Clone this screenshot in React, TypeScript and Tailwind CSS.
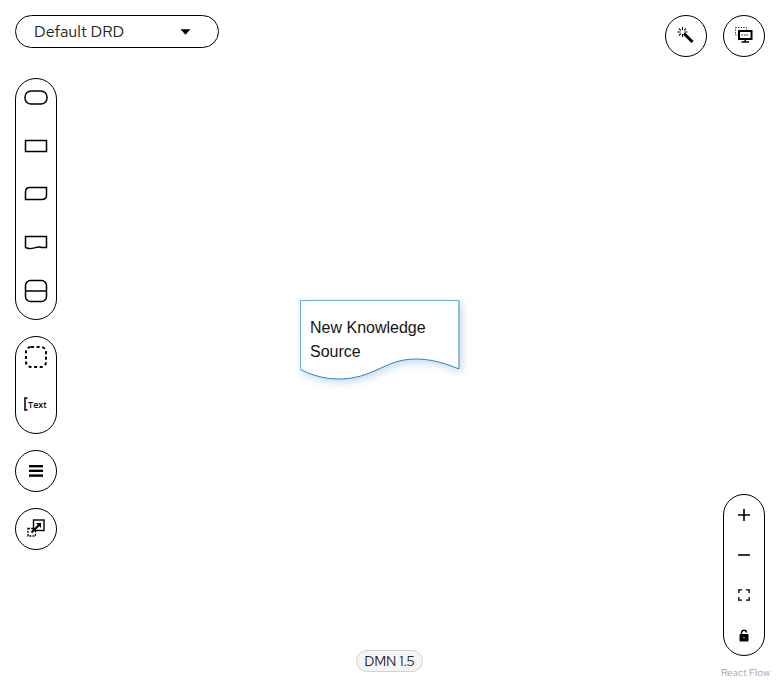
import React from 'react'

const uiFont = "font-['Red_Hat_Text','Noto_Sans',sans-serif]"

const Pill: React.FC<{ className?: string; children: React.ReactNode }> = ({ className = '', children }) => (
  <div className={`flex w-[42px] flex-col items-center rounded-[21px] border border-black bg-white ${className}`}>
    {children}
  </div>
)

const Slot: React.FC<{ h?: string; children: React.ReactNode }> = ({ h = 'h-[48px]', children }) => (
  <div className={`flex w-full items-center justify-center ${h}`}>{children}</div>
)

const Shape: React.FC<{ children: React.ReactNode }> = ({ children }) => (
  <svg width="26" height="26" viewBox="0 0 26 26" fill="none" stroke="black" strokeWidth="1.5">
    {children}
  </svg>
)

const App: React.FC = () => {
  return (
    <div className={`relative flex h-[680px] w-[780px] justify-between overflow-hidden bg-white ${uiFont}`}>
      <div className="flex flex-col pl-[15px] pt-[15px]">
        <div className="flex h-[33px] w-[204px] items-center justify-between rounded-[17px] border border-black pl-[18px] pr-[27px] text-base text-[#222]">
          <span className="pt-[1px]">Default DRD</span>
          <svg width="11" height="6" viewBox="0 0 11 6">
            <path d="M0.5 0.2 H10.5 L5.5 5.8 Z" fill="black" />
          </svg>
        </div>

        <Pill className="mt-[30px] h-[242px] justify-between pb-[15px] pt-[5px]">
          <Slot h="h-[26px]">
            <Shape>
              <rect x="2" y="7" width="22" height="13" rx="6" />
            </Shape>
          </Slot>
          <Slot h="h-[26px]">
            <Shape>
              <rect x="2.5" y="7.5" width="21" height="11" />
            </Shape>
          </Slot>
          <Slot h="h-[26px]">
            <Shape>
              <path d="M7 6.5 H23.5 V14 Q23.5 18.5 19 18.5 H2.5 V11 Q2.5 6.5 7 6.5 Z" />
            </Shape>
          </Slot>
          <Slot h="h-[26px]">
            <Shape>
              <path d="M2.5 6.5 H23.5 V17.5 H19 C14 15.5 10 19.5 6 18.5 C4.5 18.2 3.5 18 2.5 17.5 Z" />
            </Shape>
          </Slot>
          <Slot h="h-[26px]">
            <Shape>
              <rect x="2.5" y="2.5" width="21" height="21" rx="5" />
              <path d="M2.5 13 H23.5" />
            </Shape>
          </Slot>
        </Pill>

        <Pill className="mt-4 h-[98px]">
          <Slot h="h-[38px]">
            <svg className="mt-[2px]" width="26" height="26" viewBox="0 0 26 26" fill="none" stroke="black" strokeWidth="2" strokeDasharray="3 2.6">
              <rect x="3" y="3" width="20" height="20" rx="5" />
            </svg>
          </Slot>
          <div className="mt-[17px] flex h-[24px] w-full items-center justify-center pr-[1px]">
            <svg width="4" height="14" viewBox="0 0 4 14" fill="none" stroke="black" strokeWidth="1.5">
              <path d="M3.5 1 H1 V13 H3.5" />
            </svg>
            <span className="font-['Open_Sans',sans-serif] text-[9px] font-semibold leading-none text-black">Text</span>
          </div>
        </Pill>

        <Pill className="mt-4 h-[42px] justify-center">
          <svg className="mb-[1px]" width="14" height="12" viewBox="0 0 14 12" fill="black">
            <rect x="0" y="0" width="14" height="2.4" />
            <rect x="0" y="4.6" width="14" height="2.4" />
            <rect x="0" y="9.4" width="14" height="2.4" />
          </svg>
        </Pill>

        <Pill className="mt-4 h-[42px] justify-center">
          <svg className="mb-[2px]" width="18" height="18" viewBox="0 0 18 18" fill="none" stroke="black">
            <rect x="1" y="9.5" width="7.5" height="7.5" strokeWidth="1.3" strokeDasharray="2 1.2" />
            <rect x="6.5" y="1" width="10.5" height="10.5" fill="white" strokeWidth="1.4" />
            <path d="M4.5 13.5 L12.5 5.5" strokeWidth="2.2" />
            <path d="M9 4 H14 V9 Z" fill="black" stroke="none" />
          </svg>
        </Pill>
      </div>

      <div className="flex gap-4 pr-[15px] pt-[15px]">
        <Pill className="h-[42px] justify-center">
          <svg className="mb-[2px]" width="18" height="18" viewBox="0 0 18 18" fill="none" stroke="black">
            <path d="M7 7.5 L15.5 16" strokeWidth="3" />
            <path d="M5.5 1 V4 M5.5 8 V11 M0.5 6 H3.5 M7.5 6 H10.5 M2 2.5 L3.8 4.3 M9 2.5 L7.2 4.3 M2 9.5 L3.8 7.7" strokeWidth="1.1" />
          </svg>
        </Pill>
        <Pill className="h-[42px] justify-center">
          <svg className="mb-[3px]" width="18" height="16" viewBox="0 0 18 16" fill="none" stroke="black">
            <rect x="0.5" y="0.5" width="11" height="7.5" strokeWidth="0.8" strokeDasharray="1.4 1.2" />
            <rect x="4" y="4" width="12.5" height="8" fill="white" strokeWidth="2" />
            <path d="M6.5 8 H14" strokeWidth="0.9" strokeDasharray="1.5 1" />
            <path d="M10.2 12.5 V14.5 M6.5 15 H14" strokeWidth="1.4" />
          </svg>
        </Pill>
      </div>

      {/* node sits on the diagram canvas */}
      <div className="absolute left-[300px] top-[300px] h-[84px] w-[160px]">
        <svg className="absolute inset-0 drop-shadow-[2px_3px_4px_rgba(0,90,150,0.22)]" width="160" height="84" viewBox="0 0 160 84" fill="white">
          <path d="M0.5 0.5 H159 V69 C140 61 122 57 104 60 C84 63 70 78 42 79 C24 79.5 12 75 0.5 69.5 Z" stroke="none" />
          <path d="M0.5 69.5 V0.5 H159" fill="none" stroke="#6badd3" strokeWidth="1" />
          <path d="M159 0.5 V69" fill="none" stroke="#4f9ac9" strokeWidth="1.2" />
          <path d="M159 69 C140 61 122 57 104 60 C84 63 70 78 42 79 C24 79.5 12 75 0.5 69.5" fill="none" stroke="#2a85bd" strokeWidth="1" />
        </svg>
        <div className="absolute left-[10px] top-[16px] font-['Liberation_Sans',sans-serif] text-base leading-6 text-[#151515]">
          New Knowledge
          <br />
          Source
        </div>
      </div>

      {/* react flow overlays */}
      <Pill className="absolute left-[723px] top-[494px] h-[162px]">
        <Slot h="h-[40px]">
          <svg width="14" height="14" viewBox="0 0 14 14" stroke="black" strokeWidth="1.6">
            <path d="M7 1 V13 M1 7 H13" />
          </svg>
        </Slot>
        <Slot h="h-[39px]">
          <svg width="14" height="14" viewBox="0 0 14 14" stroke="black" strokeWidth="1.6">
            <path d="M1 7 H13" />
          </svg>
        </Slot>
        <Slot h="h-[41px]">
          <svg width="12" height="12" viewBox="0 0 12 12" fill="none" stroke="black" strokeWidth="1.3">
            <path d="M0.8 4 V0.8 H4 M8 0.8 H11.2 V4 M11.2 8 V11.2 H8 M4 11.2 H0.8 V8" />
          </svg>
        </Slot>
        <Slot h="h-[40px]">
          <svg width="10" height="13" viewBox="0 0 10 13">
            <path d="M2.5 5.5 V3.5 C2.5 0.5 7.5 0.5 7.5 3.5" fill="none" stroke="black" strokeWidth="1.4" />
            <rect x="0.5" y="5" width="9" height="7.5" rx="1" fill="black" />
            <circle cx="5" cy="8.7" r="0.7" fill="white" />
          </svg>
        </Slot>
      </Pill>

      <div className="absolute left-[356px] top-[650px] flex h-[22px] w-[67px] items-center justify-center rounded-[11px] border border-[#d2d2d2] bg-[#f5f5f5] text-[14px] tracking-[-0.2px] text-[#222]">
        DMN 1.5
      </div>

      <div className="absolute right-[10px] top-[666px] text-[10px] leading-[14px] text-[#a3a3a3]">React Flow</div>
    </div>
  )
}

export default App
